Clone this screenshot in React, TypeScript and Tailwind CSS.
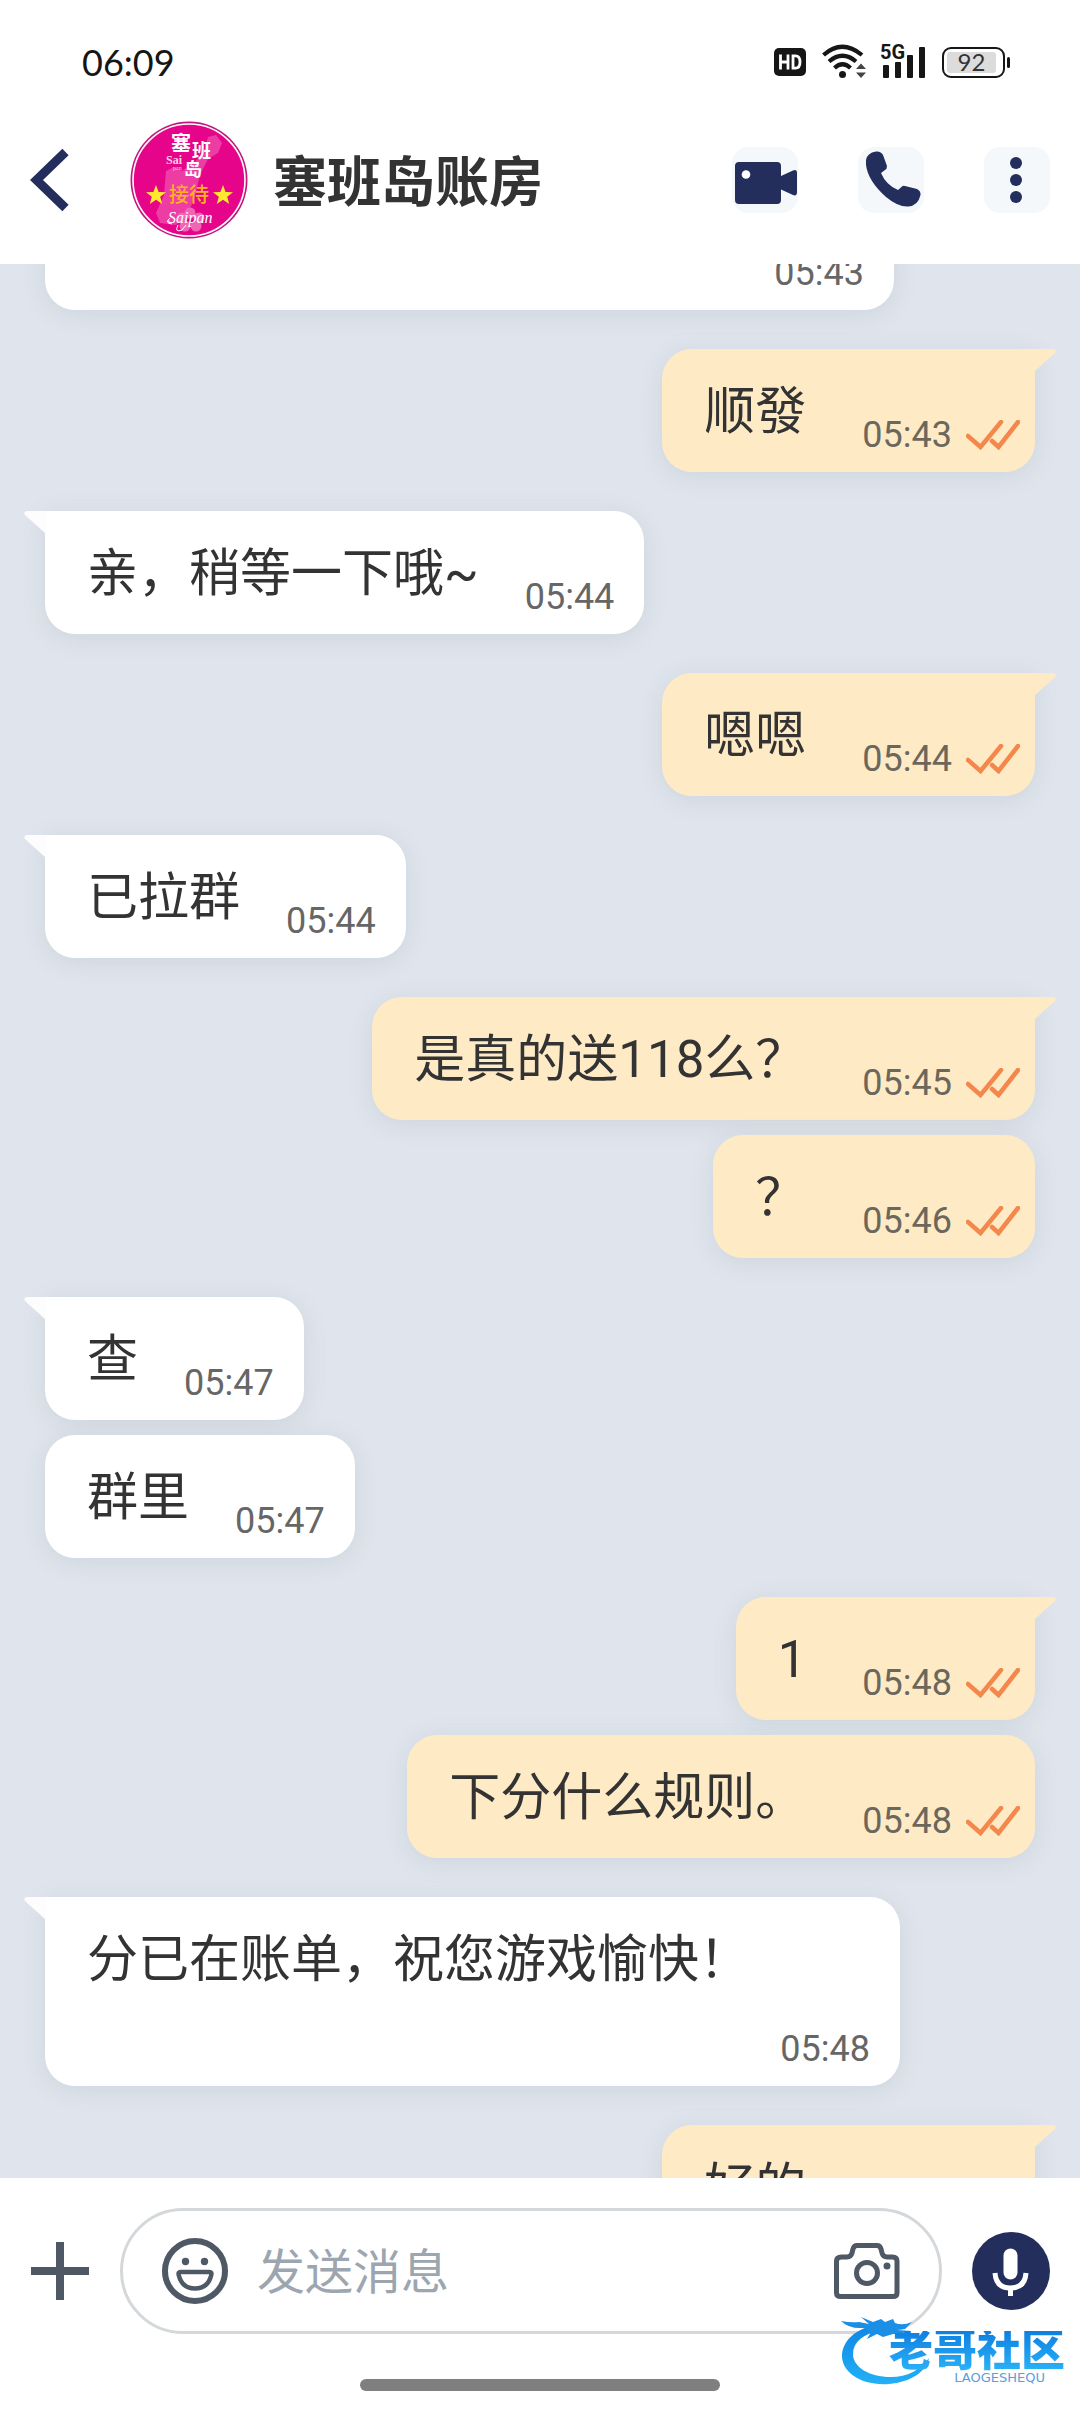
import React from "react";

type Message = { id: string; text: string; time: string; out?: boolean; wide?: boolean };

const groups: Message[][] = [
  [{ id: "m0", text: "", time: "05:43", wide: true }],
  [{ id: "m1", text: "顺發", time: "05:43", out: true }],
  [{ id: "m2", text: "亲，稍等一下哦~", time: "05:44" }],
  [{ id: "m3", text: "嗯嗯", time: "05:44", out: true }],
  [{ id: "m4", text: "已拉群", time: "05:44" }],
  [
    { id: "m5", text: "是真的送118么？", time: "05:45", out: true },
    { id: "m6", text: "？", time: "05:46", out: true },
  ],
  [
    { id: "m7", text: "查", time: "05:47" },
    { id: "m8", text: "群里", time: "05:47" },
  ],
  [
    { id: "m9", text: "1", time: "05:48", out: true },
    { id: "m10", text: "下分什么规则。", time: "05:48", out: true },
  ],
  [{ id: "m11", text: "分已在账单，祝您游戏愉快！", time: "05:48" }],
  [{ id: "m12", text: "好的", time: "05:49", out: true }],
];

function DoubleCheck() {
  return (
    <svg className="h-[30px] w-[54px] shrink-0" viewBox="0 0 54 30" fill="none" stroke="#f4874b" strokeWidth="4.500" strokeLinecap="round" strokeLinejoin="miter" aria-label="已读">
      <path d="M2 16 L14.500 27 L35 2" />
      <path d="M26 21 L32.500 27 L52 2" />
    </svg>
  );
}

function Tail({ out }: { out?: boolean }) {
  return out ? (
    <svg className="absolute -right-[21px] top-0 h-[22px] w-[22px]" viewBox="0 0 22 22" aria-hidden="true">
      <path d="M0 0 H19 Q23 0.500 21 4 L1 22 H0 Z" fill="#feebc6" />
    </svg>
  ) : (
    <svg className="absolute -left-[21px] top-0 h-[22px] w-[22px]" viewBox="0 0 22 22" aria-hidden="true">
      <path d="M22 0 H3 Q-1 0.500 1 4 L21 22 H22 Z" fill="#fdfdfe" />
    </svg>
  );
}

function Bubble({ message, first }: { message: Message; first: boolean }) {
  const { text, time, out, wide } = message;
  const side = out
    ? "self-end bg-[#feebc6] pr-[15px] gap-x-[56px]"
    : "self-start bg-white pr-[30px] gap-x-[46px]";
  const corner = first ? (out ? "rounded-[30px] rounded-tr-none" : "rounded-[30px] rounded-tl-none") : "rounded-[30px]";
  return (
    <div
      className={`relative flex max-w-[855px] flex-wrap items-end justify-between pb-4 pl-[42px] pt-7 shadow-[0_4px_24px_rgba(90,110,110,0.14)] ${side} ${corner} ${wide ? "w-[849px]" : ""}`}
    >
      {first && <Tail out={out} />}
      <p className="mb-[10px] text-[51px] leading-[69px] text-[#333333]">{text}</p>
      <div className="ml-auto flex h-[66px] items-end gap-[14px]">
        <time className={`text-[36px] leading-[42px] ${out ? "text-[#6c675c]" : "text-[#666666]"}`}>{time}</time>
        {out && (
          <span className="flex h-[42px] items-center">
            <DoubleCheck />
          </span>
        )}
      </div>
    </div>
  );
}

function StatusBar() {
  return (
    <div className="flex h-24 items-center justify-between pl-[82px] pr-[70px] pt-[28px]">
      <span className="font-['Lato'] text-[36px] leading-[44px] text-[#151515]">06:09</span>
      <div className="flex items-center">
        <svg className="h-7 w-8" viewBox="0 0 32 28" role="img" aria-label="HD">
          <rect width="32" height="28" rx="5" fill="#161616" />
          <path d="M6.500 6.500 V21.500 M14 6.500 V21.500 M6.500 14 H14" stroke="#fff" strokeWidth="2.800" fill="none" />
          <path d="M19 7.800 V20.200 H21.500 Q26 20.200 26 14 Q26 7.800 21.500 7.800 Z" stroke="#fff" strokeWidth="2.800" fill="none" />
        </svg>
        <svg className="ml-4 h-9 w-[44px]" viewBox="0 0 44 36" role="img" aria-label="Wi-Fi">
          <g fill="none" stroke="#161616" strokeWidth="4.200">
            <path d="M1.500 11 Q20 -5.500 40 11" />
            <path d="M7 17.500 Q20.500 6 34 17.500" />
            <path d="M12.500 24 Q20.500 16.500 28.500 24" />
          </g>
          <circle cx="20.500" cy="30.500" r="3.500" fill="#161616" />
          <path d="M34 25 L39 19.500 L44 25 Z M34 28.500 L39 34 L44 28.500 Z" fill="#444" />
        </svg>
        <div className="relative ml-[14px] h-[34px] w-[46px]">
          <span className="absolute left-0 -top-[3px] font-['Roboto'] text-[20px] font-bold leading-5 text-[#161616]">5G</span>
          <svg className="h-[34px] w-[46px]" viewBox="0 0 46 34" aria-hidden="true">
            <g fill="#161616">
              <rect x="3" y="20" width="6" height="13" rx="1" />
              <rect x="15" y="17" width="6" height="16" rx="1" />
              <rect x="27" y="10" width="6" height="23" rx="1" />
              <rect x="39" y="2" width="6" height="31" rx="1" />
            </g>
          </svg>
        </div>
        <div className="ml-4 flex items-center gap-[2px]">
          <div className="flex h-[31px] w-[63px] rounded-[9px] border-2 border-[#161616] p-[3px]">
            <div className="flex w-[49px] items-center justify-center rounded-[3px] bg-[#dcdcdc] font-['Lato'] text-[24px] leading-6 text-[#333]">92</div>
          </div>
          <div className="h-[11px] w-[3px] rounded-sm bg-[#161616]" />
        </div>
      </div>
    </div>
  );
}

function Avatar() {
  return (
    <svg className="h-[118px] w-[118px]" viewBox="0 0 118 118" role="img" aria-label="塞班岛 接待">
      <circle cx="59" cy="59" r="58.500" fill="#c2187a" />
      <circle cx="59" cy="59" r="56" fill="#e6058a" stroke="#fff" strokeWidth="1.600" />
      <path d="M78 16 L86 14 L92 22 L88 32 L78 38 L70 54 L64 78 L58 92 L46 104 L30 102 L26 92 L34 74 L36 50 L44 46 L52 50 L66 40 L74 30 Z" fill="#f04fae" opacity=".75" />
      <g fill="#fff" fontFamily="'Noto Sans CJK SC', sans-serif" fontWeight="700">
        <text x="41" y="30" fontSize="20">塞</text>
        <text x="62" y="37" fontSize="19">班</text>
        <text x="54" y="55" fontSize="18">岛</text>
      </g>
      <text x="36" y="43" fontSize="12" fill="#fbd0e6" fontFamily="'Liberation Serif', serif" fontWeight="700">Sai</text>
      <text x="43" y="49" fontSize="6" fill="#fbd0e6" fontFamily="'Liberation Serif', serif">pan</text>
      <text x="39" y="81" fontSize="20" fill="#ffb21e" fontFamily="'Noto Sans CJK SC', sans-serif" fontWeight="500">接待</text>
      <path d="M26 64 L28.600 71 L36 71.200 L30.200 75.800 L32.200 83 L26 78.800 L19.800 83 L21.800 75.800 L16 71.200 L23.400 71 Z" fill="#ffe92e" />
      <path d="M93 64 L95.600 71 L103 71.200 L97.200 75.800 L99.200 83 L93 78.800 L86.800 83 L88.800 75.800 L83 71.200 L90.400 71 Z" fill="#ffe92e" />
      <g fill="#f166b4">
        <circle cx="60" cy="92" r="5.500" />
        <circle cx="69" cy="97" r="5.500" />
        <circle cx="66" cy="105" r="5.500" />
        <circle cx="55" cy="105" r="5.500" />
        <circle cx="52" cy="97" r="5.500" />
      </g>
      <text x="38" y="102" fontSize="16" fill="#fff" fontStyle="italic" fontFamily="'Liberation Serif', serif">Saipan</text>
      <path d="M40 97 Q34 102 42 103 M48 104 Q44 112 52 109 L56 104" stroke="#fff" strokeWidth="1" fill="none" />
    </svg>
  );
}

function Header() {
  return (
    <header className="shrink-0 bg-white">
      <StatusBar />
      <div className="flex h-[168px] items-center pl-[29px] pr-[30px]">
        <button type="button" aria-label="返回" className="h-[66px] w-[42px]">
          <svg className="h-[66px] w-[42px]" viewBox="0 0 42 66" fill="none" stroke="#232e5c" strokeWidth="9">
            <path d="M36.500 5 L7.500 33 L36.500 61" />
          </svg>
        </button>
        <div className="ml-[59px] shrink-0">
          <Avatar />
        </div>
        <h1 className="ml-[25px] flex-1 pt-2 text-[54px] font-bold leading-[72px] text-[#333333]">塞班岛账房</h1>
        <div className="flex items-center gap-[60px]">
          <button type="button" aria-label="视频通话" className="flex h-[66px] w-[66px] items-center justify-center rounded-[16px] bg-[#f4f8fb]">
            <svg className="h-[66px] w-[66px]" viewBox="0 0 66 66" fill="#232e5c">
              <path d="M7 15 H45 Q49 15 49 19 V29 L61 23.500 Q65 22 65 26 V45 Q65 49.500 61 48 L49 42.500 V53 Q49 57 45 57 H7 Q3 57 3 53 V19 Q3 15 7 15 Z" />
              <circle cx="14" cy="27.500" r="4.300" fill="#fff" />
            </svg>
          </button>
          <button type="button" aria-label="语音通话" className="flex h-[66px] w-[66px] items-center justify-center rounded-[16px] bg-[#f4f8fb]">
            <svg className="h-[66px] w-[66px]" viewBox="0 0 66 66" fill="#232e5c">
              <path d="M8 13 Q9 6 18 4.500 Q23 4 25 8 L29 19 Q29 22 27 23 L23 26 Q28 38 40 43 L44 39.500 Q45 38.500 47 39 L59 42 Q63 44 62.500 48 Q60 59 50 59.500 Q40 60 28 50 Q10 34 8 18 Z" />
            </svg>
          </button>
          <button type="button" aria-label="更多" className="flex h-[66px] w-[66px] items-center justify-center rounded-[16px] bg-[#f4f8fb]">
            <svg className="h-[66px] w-[66px]" viewBox="0 0 66 66" fill="#232e5c">
              <circle cx="32" cy="16" r="6" />
              <circle cx="32" cy="33" r="6" />
              <circle cx="32" cy="50" r="6" />
            </svg>
          </button>
        </div>
      </div>
    </header>
  );
}

function Watermark() {
  return (
    <div className="pointer-events-none absolute bottom-[20px] right-[15px] h-[80px] w-[226px]">
      <svg className="absolute left-0 top-0 h-[80px] w-[100px]" viewBox="0 0 100 80" aria-hidden="true">
        <defs>
          <linearGradient id="ring" x1="0" y1="0" x2="0" y2="1">
            <stop offset="0" stopColor="#0f86e4" />
            <stop offset="1" stopColor="#22b0f7" />
          </linearGradient>
        </defs>
        <path d="M38 13 C16 16 3 30 3 44 C3 60 22 74 50 72 C72 70 87 60 90 46 C82 58 68 65 52 65 C30 65 14 55 14 42 C14 30 24 22 42 18 Z" fill="url(#ring)" />
        <path d="M2 9 Q12 11 20 10 L30 12 L22 5 L34 10 L42 7 L46 10 L54 7 L56 11 Q64 14 73 10 L66 17 L58 18 L72 19 L64 21 L71 23 L54 22 L44 25 L38 22 L28 27 L32 20 L24 16 Q10 17 2 9 Z" fill="#1b8fe6" />
      </svg>
      <p className="absolute right-0 top-[19px] bg-linear-to-b from-[#0f7fe0] to-[#2bb2f8] bg-clip-text text-[44px] font-black leading-[40px] text-transparent">老哥社区</p>
      <p className="absolute right-[20px] top-[60px] font-['DejaVu_Sans'] text-[13px] leading-3 text-[#5b9edb]">LAOGESHEQU</p>
    </div>
  );
}

function Composer() {
  return (
    <footer className="relative shrink-0 bg-white pb-[21px] pt-[30px]">
      <form className="flex items-center pl-[30px] pr-[30px]" onSubmit={(e) => e.preventDefault()}>
        <button type="button" aria-label="添加" className="h-[60px] w-[60px]">
          <svg className="h-[60px] w-[60px]" viewBox="0 0 60 60" stroke="#4f5966" strokeWidth="8">
            <path d="M1 30 H59 M30 1 V59" />
          </svg>
        </button>
        <div className="ml-[30px] flex h-[126px] min-w-0 flex-1 items-center rounded-full border-[3px] border-[#d4d8db] px-[39px]">
          <button type="button" aria-label="表情" className="h-[66px] w-[66px] shrink-0">
            <svg className="h-[66px] w-[66px]" viewBox="0 0 66 66" fill="none" stroke="#4f5966">
              <circle cx="33" cy="33" r="30" strokeWidth="6" />
              <circle cx="23.500" cy="23.500" r="3.700" fill="#4f5966" stroke="none" />
              <circle cx="42.500" cy="23.500" r="3.700" fill="#4f5966" stroke="none" />
              <path d="M18.500 34 H47.500 Q50 34 49.300 37 Q46 50.500 33 50.500 Q20 50.500 16.700 37 Q16 34 18.500 34 Z" strokeWidth="4.500" />
            </svg>
          </button>
          <input
            type="text"
            aria-label="发送消息"
            placeholder="发送消息"
            className="ml-[29px] min-w-0 flex-1 bg-transparent pt-1 text-[48px] leading-[72px] text-[#333333] outline-none placeholder:text-[#9ca6b0]"
          />
          <button type="button" aria-label="拍照" className="h-[66px] w-[66px] shrink-0">
            <svg className="h-[66px] w-[66px]" viewBox="0 0 66 66" fill="none" stroke="#4f5966" strokeWidth="5">
              <path d="M7.500 19 H13 Q17 19 18 15 L19 11 Q20 7.500 23 7.500 H43 Q46 7.500 47 11 L48 15 Q49 19 53 19 H58.500 Q63 19 63 23 V55 Q63 58.500 59 58.500 H7 Q2.500 58.500 2.500 55 V23 Q2.500 19 7.500 19 Z" />
              <circle cx="33" cy="35" r="10.500" />
              <circle cx="53" cy="28" r="3.500" fill="#4f5966" stroke="none" />
            </svg>
          </button>
        </div>
        <button type="button" aria-label="语音" className="ml-[30px] h-[78px] w-[78px] shrink-0 rounded-full bg-[#232e5c]">
          <svg className="h-[78px] w-[78px]" viewBox="0 0 78 78" fill="none">
            <rect x="31.500" y="16.500" width="14" height="31" rx="7" fill="#fff" />
            <path d="M23 41 Q24 56 38.500 56 Q53 56 54 41" stroke="#fff" strokeWidth="5" />
            <path d="M38.500 56 V64" stroke="#fff" strokeWidth="5" />
          </svg>
        </button>
      </form>
      <div className="mx-auto mt-[45px] h-3 w-1/3 rounded-full bg-[#7f7f7f]" />
      <Watermark />
    </footer>
  );
}

export default function App() {
  return (
    <div className="flex h-screen flex-col overflow-hidden bg-[#e0e5ed] font-['Roboto','Noto_Sans_CJK_SC',sans-serif]">
      <Header />
      <main className="min-h-0 flex-1 overflow-hidden px-[45px]">
        <div className="-mt-16 flex flex-col gap-[39px]">
          {groups.map((group) => (
            <section key={group[0].id} className="flex flex-col gap-[15px]">
              {group.map((message, index) => (
                <Bubble key={message.id} message={message} first={index === 0} />
              ))}
            </section>
          ))}
        </div>
      </main>
      <Composer />
    </div>
  );
}
